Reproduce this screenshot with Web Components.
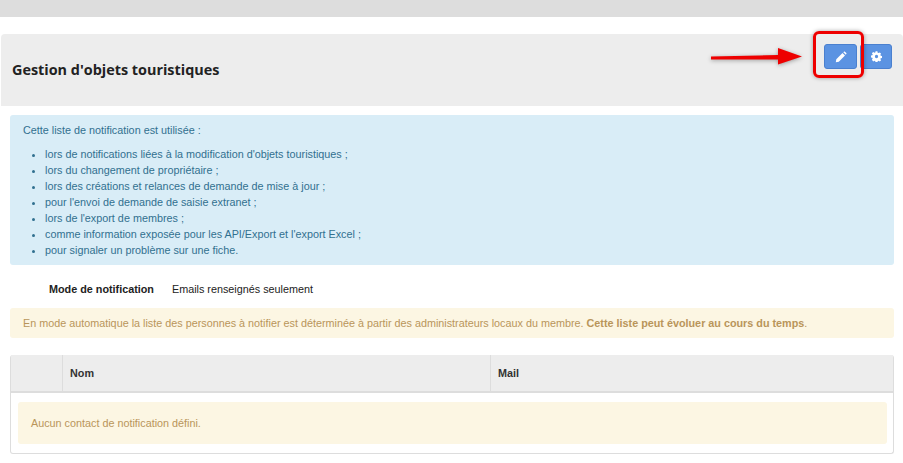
<!DOCTYPE html>
<html lang="fr">
<head>
<meta charset="utf-8">
<title>Gestion d'objets touristiques</title>
<style>
    html, body { margin: 0; height: 463px; overflow: hidden; background: #fff; }
    body { font: 10.8px/16px "Liberation Sans", Arial, sans-serif; color: #333; }
</style>
</head>
<body>
<app-page>
    <page-header title="Gestion d'objets touristiques"></page-header>
    <info-box></info-box>
    <mode-row></mode-row>
    <alert-box class="auto">En mode automatique la liste des personnes à notifier est déterminée à partir des administrateurs locaux du membre. <b>Cette liste peut évoluer au cours du temps</b>.</alert-box>
    <contact-table></contact-table>
</app-page>

<script>
class AppPage extends HTMLElement {
    constructor() {
        super();
        this.attachShadow({ mode: "open" }).innerHTML = `
            <style>
                :host { display: block; padding-top: 17px; position: relative; }
                .top { position: absolute; top: 0; left: 0; right: 0; height: 17px; background: #dddddd; }
            </style>
            <div class="top"></div>
            <slot></slot>
        `;
    }
}

class PageHeader extends HTMLElement {
    constructor() {
        super();
        this.attachShadow({ mode: "open" }).innerHTML = `
            <style>
                :host { display: flex; position: relative; justify-content: space-between; height: 72px; margin: 17px 0 9px 1px; background: #ededed; border-radius: 4px 4px 0 0; }
                h1 { margin: 0; padding: 27px 0 0 11px; font: 700 14.4px/18px "Open Sans", sans-serif; color: #222; }
                .buttons { display: flex; gap: 3px; padding: 10px 11px 0 0; }
                button { width: 33px; height: 25px; padding: 0; display: flex; align-items: center; justify-content: center; background: #5b93e2; border: 1px solid #4a80cf; border-radius: 3px; }
                .frame { position: absolute; left: 812px; top: -3px; width: 45px; height: 41px; border: 3px solid #ee0000; border-radius: 6px; box-shadow: 0 0 4px rgba(0,0,0,.35); }
                .arrow { position: absolute; left: 709px; top: 11px; }
            </style>
            <h1></h1>
            <div class="buttons">
                <button aria-label="Modifier">
                    <svg width="12" height="12" viewBox="0 0 12 12"><path fill="#fff" d="M1.3 8.2 7.5 2l2.5 2.5-6.2 6.2-3 .5zM8.3 1.2l.6-.5c.3-.3.7-.3 1 0l1.4 1.4c.3.3.3.7 0 1l-.5.6z"/></svg>
                </button>
                <button aria-label="Réglages" style="width:32px">
                    <svg width="11" height="11" viewBox="0 0 12 12"><path fill="#fff" fill-rule="evenodd" d="M5 .8h2l.3 1.5 1 .4 1.3-.8 1.4 1.4-.8 1.3.4 1 1.5.3v2l-1.5.3-.4 1 .8 1.3-1.4 1.4-1.3-.8-1 .4-.3 1.5H5l-.3-1.5-1-.4-1.3.8L1 10l.8-1.3-.4-1L0 7.4v-2l1.5-.3.4-1L1 2.9l1.4-1.4 1.3.8 1-.4zM6 4.6a1.8 1.8 0 1 0 0 3.6 1.8 1.8 0 0 0 0-3.6z" transform="translate(0 -.4)"/></svg>
                </button>
            </div>
            <div class="frame"></div>
            <svg class="arrow" width="94" height="24" viewBox="0 0 94 24" style="filter: drop-shadow(0 1px 2px rgba(0,0,0,.35))">
                <path fill="#ee0000" d="M1 11.5 68 10V3l24 8.5-24 8v-5L1 14.5z"/>
            </svg>
        `;
        this.shadowRoot.querySelector("h1").textContent = this.getAttribute("title");
    }
}

class InfoBox extends HTMLElement {
    constructor() {
        super();
        const items = [
            "lors de notifications liées à la modification d'objets touristiques ;",
            "lors du changement de propriétaire ;",
            "lors des créations et relances de demande de mise à jour ;",
            "pour l'envoi de demande de saisie extranet ;",
            "lors de l'export de membres ;",
            "comme information exposée pour les API/Export et l'export Excel ;",
            "pour signaler un problème sur une fiche."
        ];
        this.attachShadow({ mode: "open" }).innerHTML = `
            <style>
                :host { display: block; margin: 0 9px 0 10px; height: 150px; box-sizing: border-box; padding: 7px 13px; background: #d9edf7; border-radius: 3px; color: #31708f; }
                p { margin: 0 0 8px; }
                ul { margin: 0; padding-left: 22px; }
            </style>
            <p>Cette liste de notification est utilisée :</p>
            <ul>${items.map(i => `<li>${i}</li>`).join("")}</ul>
        `;
    }
}

class ModeRow extends HTMLElement {
    constructor() {
        super();
        this.attachShadow({ mode: "open" }).innerHTML = `
            <style>
                :host { display: flex; gap: 18px; height: 43px; box-sizing: border-box; padding: 4px 0 0 49px; align-items: center; color: #222; }
                b { font-weight: 700; }
            </style>
            <b>Mode de notification</b>
            <span>Emails renseignés seulement</span>
        `;
    }
}

class AlertBox extends HTMLElement {
    constructor() {
        super();
        this.attachShadow({ mode: "open" }).innerHTML = `
            <style>
                :host { display: block; box-sizing: border-box; padding: 7px 13px; background: #fcf6e3; border-radius: 3px; color: #b9955a; }
                :host(.auto) { margin: 0 9px 17px 10px; height: 30px; }
                :host(.empty) { margin: 9px 6px 10px 7px; height: 42px; padding: 13px; }
            </style>
            <slot></slot>
        `;
    }
}

class ContactTable extends HTMLElement {
    constructor() {
        super();
        this.attachShadow({ mode: "open" }).innerHTML = `
            <style>
                :host { display: block; margin: 0 9px 0 10px; height: 99px; box-sizing: border-box; border: 1px solid #ddd; border-top: 0; border-radius: 3px; }
                .head { display: grid; grid-template-columns: 51px 428px 1fr; height: 38px; background: #ededed; border-bottom: 2px solid #ddd; box-sizing: border-box; font-weight: 700; color: #333; line-height: 36px; }
                .head div { padding-left: 7px; border-left: 1px solid #ddd; }
                .head div:first-child { border-left: 0; }
            </style>
            <div class="head"><div></div><div>Nom</div><div>Mail</div></div>
            <alert-box class="empty">Aucun contact de notification défini.</alert-box>
        `;
    }
}

customElements.define("app-page", AppPage);
customElements.define("page-header", PageHeader);
customElements.define("info-box", InfoBox);
customElements.define("mode-row", ModeRow);
customElements.define("alert-box", AlertBox);
customElements.define("contact-table", ContactTable);
</script>
</body>
</html>
